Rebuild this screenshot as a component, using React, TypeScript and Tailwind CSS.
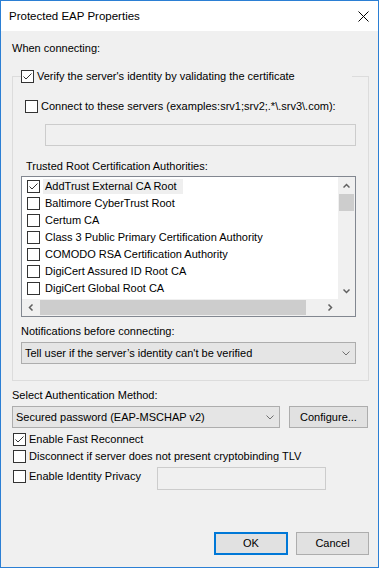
import React from 'react'

const certs = [
  'AddTrust External CA Root',
  'Baltimore CyberTrust Root',
  'Certum CA',
  'Class 3 Public Primary Certification Authority',
  'COMODO RSA Certification Authority',
  'DigiCert Assured ID Root CA',
  'DigiCert Global Root CA',
]

function Check({ checked }: { checked?: boolean }) {
  return (
    <span className="w-[13px] h-[13px] shrink-0 border border-[#333333] bg-white flex items-center justify-center">
      {checked && (
        <svg width="11" height="11" viewBox="0 0 11 11">
          <polyline points="1.5,5.5 4,8 9.5,2.5" fill="none" stroke="#333333" strokeWidth="1" />
        </svg>
      )}
    </span>
  )
}

function Chevron({ dir }: { dir: 'up' | 'down' | 'left' | 'right' }) {
  const pts = {
    up: '0.5,4.5 3.5,1.5 6.5,4.5',
    down: '0.5,1.5 3.5,4.5 6.5,1.5',
    left: '4.5,0.5 1.5,3.5 4.5,6.5',
    right: '1.5,0.5 4.5,3.5 1.5,6.5',
  }[dir]
  const vertical = dir === 'up' || dir === 'down'
  return (
    <svg width={vertical ? 7 : 6} height={vertical ? 6 : 7} viewBox={vertical ? '0 0 7 6' : '0 0 6 7'}>
      <polyline points={pts} fill="none" stroke="#606060" strokeWidth="1.5" />
    </svg>
  )
}

function Combo({ text, className }: { text: string; className: string }) {
  return (
    <div className={`h-[22px] border border-[#adadad] bg-[#e5e5e5] flex items-center justify-between pl-[3px] pr-[5px] ${className}`}>
      <span className="whitespace-nowrap">{text}</span>
      <svg width="8" height="5" viewBox="0 0 8 5">
        <polyline points="0.5,0.5 4,4 7.5,0.5" fill="none" stroke="#707070" strokeWidth="1" />
      </svg>
    </div>
  )
}

export default function App() {
  return (
    <div className="w-[379px] h-[568px] border border-[#2b7fd4] bg-[#f0f0f0] flex flex-col font-['Liberation_Sans',Arial,sans-serif] text-[11px] leading-[13px] text-black select-none">
      {/* Title bar */}
      <div className="h-[30px] shrink-0 bg-white flex items-center justify-between pl-[8px] pr-[9px]">
        <span className="text-[11.5px]">Protected EAP Properties</span>
        <svg width="11" height="11" viewBox="0 0 11 11">
          <path d="M0.5 0.5 L10.5 10.5 M10.5 0.5 L0.5 10.5" stroke="#000" strokeWidth="1" />
        </svg>
      </div>

      <div className="flex-1 flex flex-col pl-[11px] pr-[9px]">
        <div className="mt-[11px]">When connecting:</div>

        <fieldset className="mt-[15px] border border-[#dcdcdc] pl-[8px] pr-[12px] pb-[16px]">
          <legend className="w-[331px] flex items-center gap-[3px]">
            <Check checked />
            <span className="whitespace-nowrap">Verify the server's identity by validating the certificate</span>
          </legend>

          <div className="mt-[17px] ml-[4px] flex items-center gap-[3px]">
            <Check />
            <span className="whitespace-nowrap">Connect to these servers (examples:srv1;srv2;.*\.srv3\.com):</span>
          </div>

          <div className="mt-[11px] ml-[24px] w-[311px] h-[22px] border border-[#cccccc] bg-[#f0f0f0]" />

          <div className="mt-[14px] ml-[5px]">Trusted Root Certification Authorities:</div>

          {/* Certificate list */}
          <div className="mt-[3px] w-[335px] h-[141px] border border-[#828790] bg-white flex flex-col">
            <div className="flex flex-1 min-h-0">
              <div className="flex-1 pt-[1px] pl-[5px] overflow-hidden">
                {certs.map((c, i) => (
                  <div key={c} className="h-[17px] flex items-center">
                    <Check checked={i === 0} />
                    <span className={`ml-[3px] h-[15px] pl-[2px] pr-[6px] flex items-center whitespace-nowrap ${i === 0 ? 'bg-[#efefef]' : ''}`}>
                      {c}
                    </span>
                  </div>
                ))}
              </div>
              <div className="w-[17px] bg-[#f0f0f0] flex flex-col">
                <div className="h-[17px] flex items-center justify-center">
                  <Chevron dir="up" />
                </div>
                <div className="mx-[1px] h-[17px] bg-[#cdcdcd]" />
                <div className="flex-1" />
                <div className="h-[17px] flex items-center justify-center">
                  <Chevron dir="down" />
                </div>
              </div>
            </div>
            <div className="h-[17px] flex bg-[#f0f0f0]">
              <div className="w-[17px] flex items-center justify-center">
                <Chevron dir="left" />
              </div>
              <div className="ml-[1px] my-[1px] w-[266px] bg-[#cdcdcd]" />
              <div className="flex-1" />
              <div className="w-[17px] flex items-center justify-center">
                <Chevron dir="right" />
              </div>
              <div className="w-[17px]" />
            </div>
          </div>

          <div className="mt-[8px]">Notifications before connecting:</div>
          <Combo className="mt-[4px] w-[335px]" text="Tell user if the server’s identity can't be verified" />
        </fieldset>

        <div className="mt-[8px]">Select Authentication Method:</div>
        <div className="mt-[4px] flex items-center">
          <Combo className="w-[268px]" text="Secured password (EAP-MSCHAP v2)" />
          <button className="ml-[9px] w-[79px] h-[22px] border border-[#adadad] bg-[#e1e1e1]">Configure...</button>
        </div>

        <div className="mt-[5px] ml-[1px] flex items-center gap-[3px]">
          <Check checked />
          <span>Enable Fast Reconnect</span>
        </div>
        <div className="mt-[4px] ml-[1px] flex items-center gap-[3px]">
          <Check />
          <span>Disconnect if server does not present cryptobinding TLV</span>
        </div>
        <div className="mt-[4px] ml-[1px] flex items-start">
          <div className="mt-[3px] w-[144px] flex items-center gap-[3px]">
            <Check />
            <span>Enable Identity Privacy</span>
          </div>
          <div className="w-[169px] h-[23px] border border-[#cccccc] bg-[#f0f0f0]" />
        </div>

        <div className="mt-auto mb-[12px] flex justify-end gap-[8px]">
          <button className="w-[74px] h-[23px] border-2 border-[#0078d7] bg-[#e1e1e1]">OK</button>
          <button className="w-[73px] h-[23px] border border-[#adadad] bg-[#e1e1e1]">Cancel</button>
        </div>
      </div>
    </div>
  )
}
